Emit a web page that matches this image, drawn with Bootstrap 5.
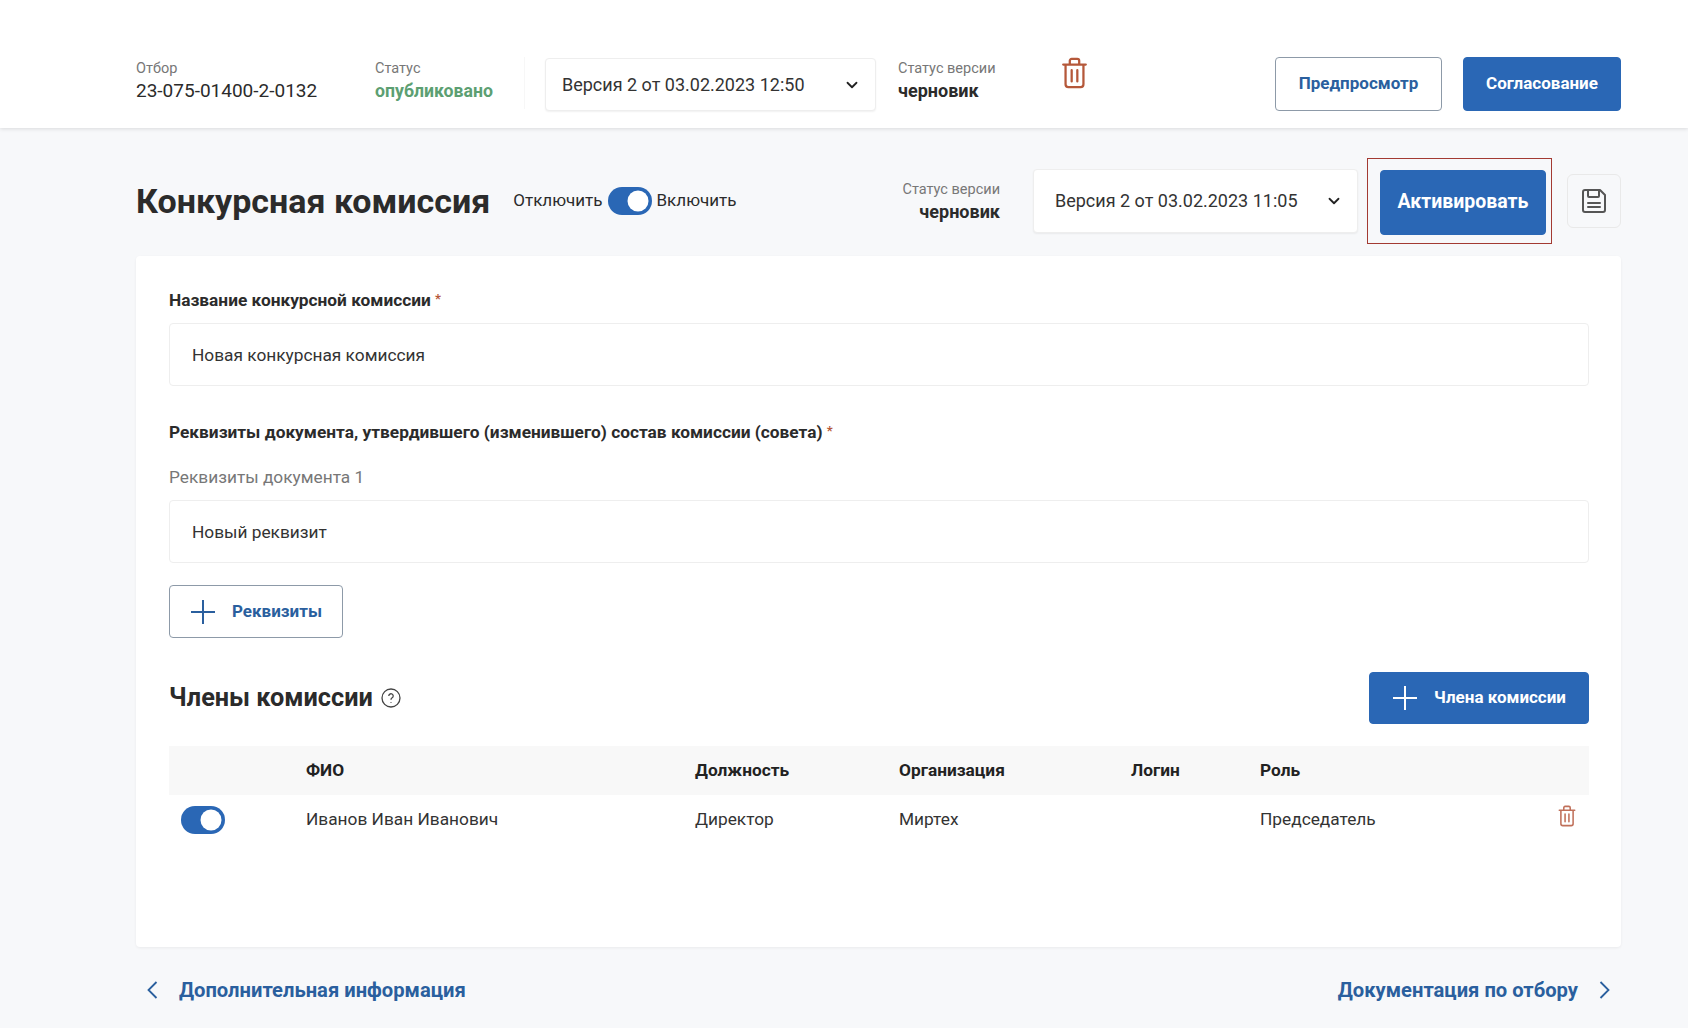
<!DOCTYPE html>
<html lang="ru">
<head>
    <meta charset="UTF-8">
    <title>Конкурсная комиссия</title>
    <link href="https://cdn.jsdelivr.net/npm/bootstrap@5.3.3/dist/css/bootstrap.min.css" rel="stylesheet">
    <style>
        body { font-family: Roboto, "Noto Sans", sans-serif; font-size: 17.3px; color: #2b2b2b; background: #f7f8fa; }
        .top-bar { height: 128px; padding: 57px 67px 0 136px; background: #fff; box-shadow: 0 1px 4px rgba(0,0,0,.12); }
        .meta-label { font-size: 14.5px; line-height: 21px; padding-top: 1px; color: #777; }
        .meta-value { font-size: 19px; line-height: 24px; }
        .meta-strong { font-size: 18px; line-height: 24px; font-weight: 700; }
        .meta-first { width: 239px; }
        .meta-second { width: 149px; }
        .meta-third { width: 163px; }
        .text-published { color: #5c9f72; font-size: 17.7px; }
        .top-divider { width: 1px; height: 52px; background: #f7f7f7; margin-right: 20px; }
        .ver-select { font-size: 18px; color: #333; border: 1px solid #eee; border-radius: 4px; box-shadow: 0 1px 2px rgba(0,0,0,.06);
            background-position: right 15px center; background-size: 16px 12px;
            background-image: url("data:image/svg+xml,%3csvg xmlns='http://www.w3.org/2000/svg' viewBox='0 0 16 16'%3e%3cpath fill='none' stroke='%23222' stroke-linecap='round' stroke-linejoin='round' stroke-width='2.4' d='m2 5 6 6 6-6'/%3e%3c/svg%3e"); }
        .ver-top { width: 331px; height: 53px; padding: 0 40px 0 16px; margin: 1px 22px 0 0; }
        .ver-main { width: 325px; height: 64px; padding: 0 40px 0 21px; margin-left: 33px; }
        .btn-blue { background: #2a67b5; border: 1px solid #2a67b5; color: #fff; font-weight: 700; border-radius: 4px; font-size: 17px; }
        .btn-blue:hover { background: #245ca3; color: #fff; }
        .btn-line { background: #fff; border: 1px solid #8d9aa8; color: #2a5f9e; font-weight: 700; border-radius: 4px; font-size: 17px; }
        .btn-preview { width: 167px; height: 54px; }
        .btn-approve { width: 158px; height: 54px; }
        .top-actions { gap: 21px; }
        .page-wrap { padding: 0 67px 0 136px; }
        .title-row { height: 128px; padding-top: 17px; }
        .page-title { font-size: 34px; line-height: 40px; font-weight: 700; color: #2b2b2b; margin: 0 23px 0 0; }
        .switch-text { font-size: 17px; }
        .form-switch.toggle-box { padding-left: 0; min-height: 0; margin: 0; display: flex; }
        .form-switch.toggle-box .form-check-input { width: 44px; height: 28px; margin: 0; float: none; border: 0; background-color: #2a67b5; }
        .form-switch.toggle-title { margin: 0 5px; }
        .mark-box { border: 1px solid #a33a32; padding: 11px 5px 8px 12px; margin: 0 15px 0 9px; }
        .btn-activate { width: 166px; height: 65px; font-size: 19.5px; padding: 0; }
        .save-btn { width: 54px; height: 54px; background: #f7f8fa; border: 1px solid #e9e9e9; border-radius: 6px; }
        .main-panel { height: 691px; padding: 31px 32px 32px 33px; border: 0; border-radius: 4px; background: #fff; box-shadow: 0 1px 3px rgba(0,0,0,.06); }
        .field-label { font-size: 17.3px; line-height: 24px; font-weight: 700; margin: 0 0 11px; color: #2b2b2b; }
        .field-label span { color: #b5583a; font-size: 13px; vertical-align: 3px; }
        .label-gap { margin-bottom: 21px; }
        .field-sub { font-size: 17.3px; line-height: 24px; color: #777; margin: 0 0 11px; }
        .field-input { height: 63px; font-size: 17.3px; color: #333; padding: 0 22px; border: 1px solid #eee; border-radius: 4px; }
        .field-first { margin-bottom: 33px; }
        .field-second { margin-bottom: 22px; }
        .btn-add { width: 174px; height: 53px; }
        .section-title { font-size: 25.3px; line-height: 30px; font-weight: 700; margin: 0; }
        .members-head { margin: 34px 0 22px; }
        .btn-member { width: 220px; height: 52px; }
        .members-table { table-layout: fixed; margin: 0; font-size: 17.3px; }
        .members-table th { height: 49px; background: #f8f8f8; font-weight: 700; padding: 0; vertical-align: middle; border: 0; color: #222; }
        .members-table td { height: 49px; padding: 0; vertical-align: middle; border: 0; color: #333; }
        .row-trash { display: block; margin: 0 0 8px 33px; }
        .foot-link { font-size: 20.2px; font-weight: 700; color: #2a5f9e; text-decoration: none; gap: 21px; }
        .foot-row { padding: 28px 10px 0 10px; }
    </style>
</head>
<body>

<div class="top-bar d-flex align-items-start">
    <div class="meta-first">
        <div class="meta-label">Отбор</div>
        <div class="meta-value">23-075-01400-2-0132</div>
    </div>
    <div class="meta-second">
        <div class="meta-label">Статус</div>
        <div class="meta-strong text-published">опубликовано</div>
    </div>
    <div class="top-divider"></div>
    <select class="form-select ver-select ver-top flex-shrink-0">
        <option>Версия 2 от 03.02.2023 12:50</option>
    </select>
    <div class="meta-third">
        <div class="meta-label">Статус версии</div>
        <div class="meta-strong">черновик</div>
    </div>
    <svg width="27" height="32" viewBox="0 0 28 34" fill="none" stroke="#b5583a" stroke-width="2.4" stroke-linejoin="round" stroke-linecap="round">
        <path d="M2 8h24M9 8V4a2 2 0 0 1 2-2h6a2 2 0 0 1 2 2v4M4.500 8v21a3 3 0 0 0 3 3h13a3 3 0 0 0 3-3V8M11 14v12M17 14v12"/>
    </svg>
    <div class="ms-auto d-flex top-actions">
        <button type="button" class="btn btn-line btn-preview p-0">Предпросмотр</button>
        <button type="button" class="btn btn-blue btn-approve p-0">Согласование</button>
    </div>
</div>

<div class="page-wrap">
    <div class="title-row d-flex align-items-center">
        <h1 class="page-title">Конкурсная комиссия</h1>
        <span class="switch-text">Отключить</span>
        <div class="form-check form-switch toggle-box toggle-title">
            <input class="form-check-input" type="checkbox" role="switch" checked>
        </div>
        <span class="switch-text">Включить</span>
        <div class="ms-auto text-end">
            <div class="meta-label">Статус версии</div>
            <div class="meta-strong">черновик</div>
        </div>
        <select class="form-select ver-select ver-main flex-shrink-0">
            <option>Версия 2 от 03.02.2023 11:05</option>
        </select>
        <div class="mark-box">
            <button type="button" class="btn btn-blue btn-activate d-block">Активировать</button>
        </div>
        <button type="button" class="save-btn d-flex align-items-center justify-content-center p-0">
            <svg width="28" height="28" viewBox="0 0 28 28" fill="none" stroke="#555" stroke-width="2" stroke-linejoin="round" stroke-linecap="round">
                <path d="M3 5a2 2 0 0 1 2-2h15l5 5v15a2 2 0 0 1-2 2H5a2 2 0 0 1-2-2zM8 3v6a1 1 0 0 0 1 1h9a1 1 0 0 0 1-1V3M8 16h12M8 20h12"/>
            </svg>
        </button>
    </div>

    <div class="card main-panel">
        <div class="field-label">Название конкурсной комиссии <span>*</span></div>
        <input type="text" class="form-control field-input field-first" value="Новая конкурсная комиссия">
        <div class="field-label label-gap">Реквизиты документа, утвердившего (изменившего) состав комиссии (совета) <span>*</span></div>
        <div class="field-sub">Реквизиты документа 1</div>
        <input type="text" class="form-control field-input field-second" value="Новый реквизит">
        <button type="button" class="btn btn-line btn-add d-flex align-items-center justify-content-center gap-3 p-0">
            <svg width="26" height="26" viewBox="0 0 26 26" stroke="#2a5f9e" stroke-width="2"><path d="M13 1v24M1 13h24"/></svg>
            Реквизиты
        </button>
        <div class="members-head d-flex align-items-center justify-content-between">
            <div class="d-flex align-items-center gap-2">
                <h2 class="section-title">Члены комиссии</h2>
                <svg width="20" height="20" viewBox="0 0 20 20" fill="none" stroke="#444" stroke-width="1.300">
                    <circle cx="10" cy="10" r="9"/>
                    <path d="M7.800 8a2.200 2.200 0 1 1 3.400 1.800c-.8.500-1.200 1-1.200 1.900M10 14v.8"/>
                </svg>
            </div>
            <button type="button" class="btn btn-blue btn-member d-flex align-items-center justify-content-center gap-3 p-0">
                <svg width="26" height="26" viewBox="0 0 26 26" stroke="#fff" stroke-width="2"><path d="M13 1v24M1 13h24"/></svg>
                Члена комиссии
            </button>
        </div>
        <table class="table members-table">
            <colgroup>
                <col style="width:137px"><col style="width:389px"><col style="width:204px"><col style="width:232px"><col style="width:129px"><col><col style="width:64px">
            </colgroup>
            <thead>
                <tr><th></th><th>ФИО</th><th>Должность</th><th>Организация</th><th>Логин</th><th>Роль</th><th></th></tr>
            </thead>
            <tbody>
                <tr>
                    <td>
                        <div class="form-check form-switch toggle-box ms-2 ps-1">
                            <input class="form-check-input" type="checkbox" role="switch" checked>
                        </div>
                    </td>
                    <td>Иванов Иван Иванович</td>
                    <td>Директор</td>
                    <td>Миртех</td>
                    <td></td>
                    <td>Председатель</td>
                    <td>
                        <svg width="18" height="24" viewBox="0 0 28 34" fill="none" stroke="#c0705a" stroke-width="2.400" stroke-linejoin="round" stroke-linecap="round" class="row-trash">
                            <path d="M2 8h24M9 8V4a2 2 0 0 1 2-2h6a2 2 0 0 1 2 2v4M4.500 8v21a3 3 0 0 0 3 3h13a3 3 0 0 0 3-3V8M11 14v12M17 14v12"/>
                        </svg>
                    </td>
                </tr>
            </tbody>
        </table>
    </div>

    <div class="foot-row d-flex justify-content-between align-items-center">
        <a href="#" class="foot-link d-flex align-items-center">
            <svg width="12" height="20" viewBox="0 0 12 20" fill="none" stroke="#2a5f9e" stroke-width="1.800"><path d="M10.500 2 2.500 10l8 8"/></svg>
            Дополнительная информация
        </a>
        <a href="#" class="foot-link d-flex align-items-center">
            Документация по отбору
            <svg width="12" height="20" viewBox="0 0 12 20" fill="none" stroke="#2a5f9e" stroke-width="1.800"><path d="m1.500 2 8 8-8 8"/></svg>
        </a>
    </div>
</div>

<script src="https://cdn.jsdelivr.net/npm/bootstrap@5.3.3/dist/js/bootstrap.bundle.min.js"></script>
</body>
</html>
